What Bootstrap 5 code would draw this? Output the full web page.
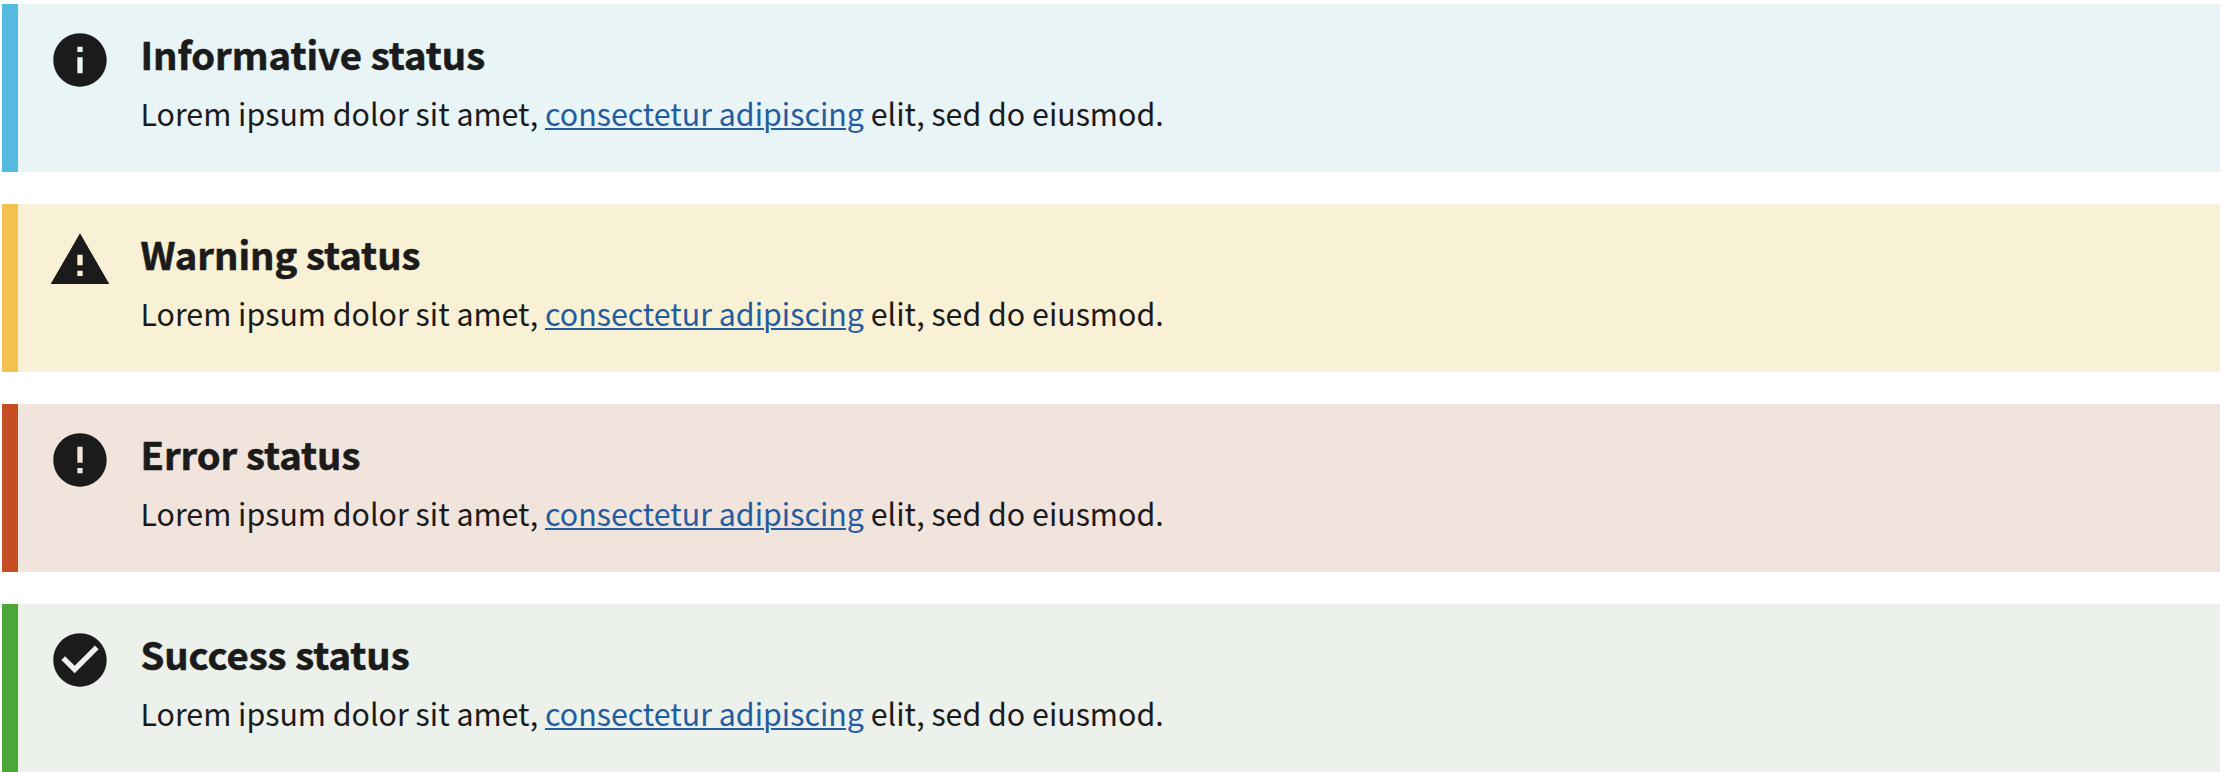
<!DOCTYPE html>
<html lang="en">
<head>
<meta charset="utf-8">
<title>Alerts</title>
<link rel="stylesheet" href="https://cdn.jsdelivr.net/npm/bootstrap@5.3.0/dist/css/bootstrap.min.css">
<style>
  body { font-family: "Noto Sans CJK SC", "Open Sans", sans-serif; color: #1b1b1b; background: #fff; }
  .alert-stack { padding: 4px 0 0 2px; gap: 32px; }
  .status-alert { height: 168px; border-left: 16px solid; padding: 24px 0 0 30px; }
  .status-icon { width: 64px; height: 64px; fill: currentColor; }
  .status-copy { padding-top: 2px; margin-left: 28.4px; }
  .status-title { font-size: 38.2px; line-height: 48px; margin-bottom: 11px; -webkit-text-stroke: .6px currentColor; }
  .status-text { font-size: 30.37px; line-height: 48px; }
  .status-text a { color: #245d9f; text-decoration-thickness: 2px; text-underline-offset: 2px; }
  .status-info { background: #e8f4f6; border-color: #55badf; }
  .status-warning { background: #f9f1d5; border-color: #f5c150; }
  .status-error { background: #f1e4dc; border-color: #c54e24; }
  .status-success { background: #ecf1eb; border-color: #4da638; }
</style>
</head>
<body>
<main class="d-flex flex-column alert-stack">
  <section class="status-alert status-info d-flex">
    <svg class="status-icon flex-shrink-0" viewBox="0 0 24 24" aria-hidden="true"><path d="M12 2C6.48 2 2 6.48 2 12s4.480 10 10 10 10-4.480 10-10S17.520 2 12 2zm1 15h-2v-6h2v6zm0-8h-2V7h2v2z"/></svg>
    <div class="status-copy">
      <h4 class="status-title fw-bold">Informative status</h4>
      <p class="status-text mb-0">Lorem ipsum dolor sit amet, <a href="#">consectetur adipiscing</a> elit, sed do eiusmod.</p>
    </div>
  </section>
  <section class="status-alert status-warning d-flex">
    <svg class="status-icon flex-shrink-0" viewBox="0 0 24 24" aria-hidden="true"><path d="M1 21h22L12 2 1 21zm12-3h-2v-2h2v2zm0-4h-2v-4h2v4z"/></svg>
    <div class="status-copy">
      <h4 class="status-title fw-bold">Warning status</h4>
      <p class="status-text mb-0">Lorem ipsum dolor sit amet, <a href="#">consectetur adipiscing</a> elit, sed do eiusmod.</p>
    </div>
  </section>
  <section class="status-alert status-error d-flex">
    <svg class="status-icon flex-shrink-0" viewBox="0 0 24 24" aria-hidden="true"><path d="M12 2C6.480 2 2 6.480 2 12s4.480 10 10 10 10-4.480 10-10S17.520 2 12 2zm1 15h-2v-2h2v2zm0-4h-2V7h2v6z"/></svg>
    <div class="status-copy">
      <h4 class="status-title fw-bold">Error status</h4>
      <p class="status-text mb-0">Lorem ipsum dolor sit amet, <a href="#">consectetur adipiscing</a> elit, sed do eiusmod.</p>
    </div>
  </section>
  <section class="status-alert status-success d-flex">
    <svg class="status-icon flex-shrink-0" viewBox="0 0 24 24" aria-hidden="true"><path d="M12 2C6.480 2 2 6.480 2 12s4.480 10 10 10 10-4.480 10-10S17.520 2 12 2zm-2 15l-5-5 1.410-1.410L10 14.170l7.590-7.590L19 8l-9 9z"/></svg>
    <div class="status-copy">
      <h4 class="status-title fw-bold">Success status</h4>
      <p class="status-text mb-0">Lorem ipsum dolor sit amet, <a href="#">consectetur adipiscing</a> elit, sed do eiusmod.</p>
    </div>
  </section>
</main>
<script src="https://cdn.jsdelivr.net/npm/bootstrap@5.3.0/dist/js/bootstrap.bundle.min.js"></script>
</body>
</html>
